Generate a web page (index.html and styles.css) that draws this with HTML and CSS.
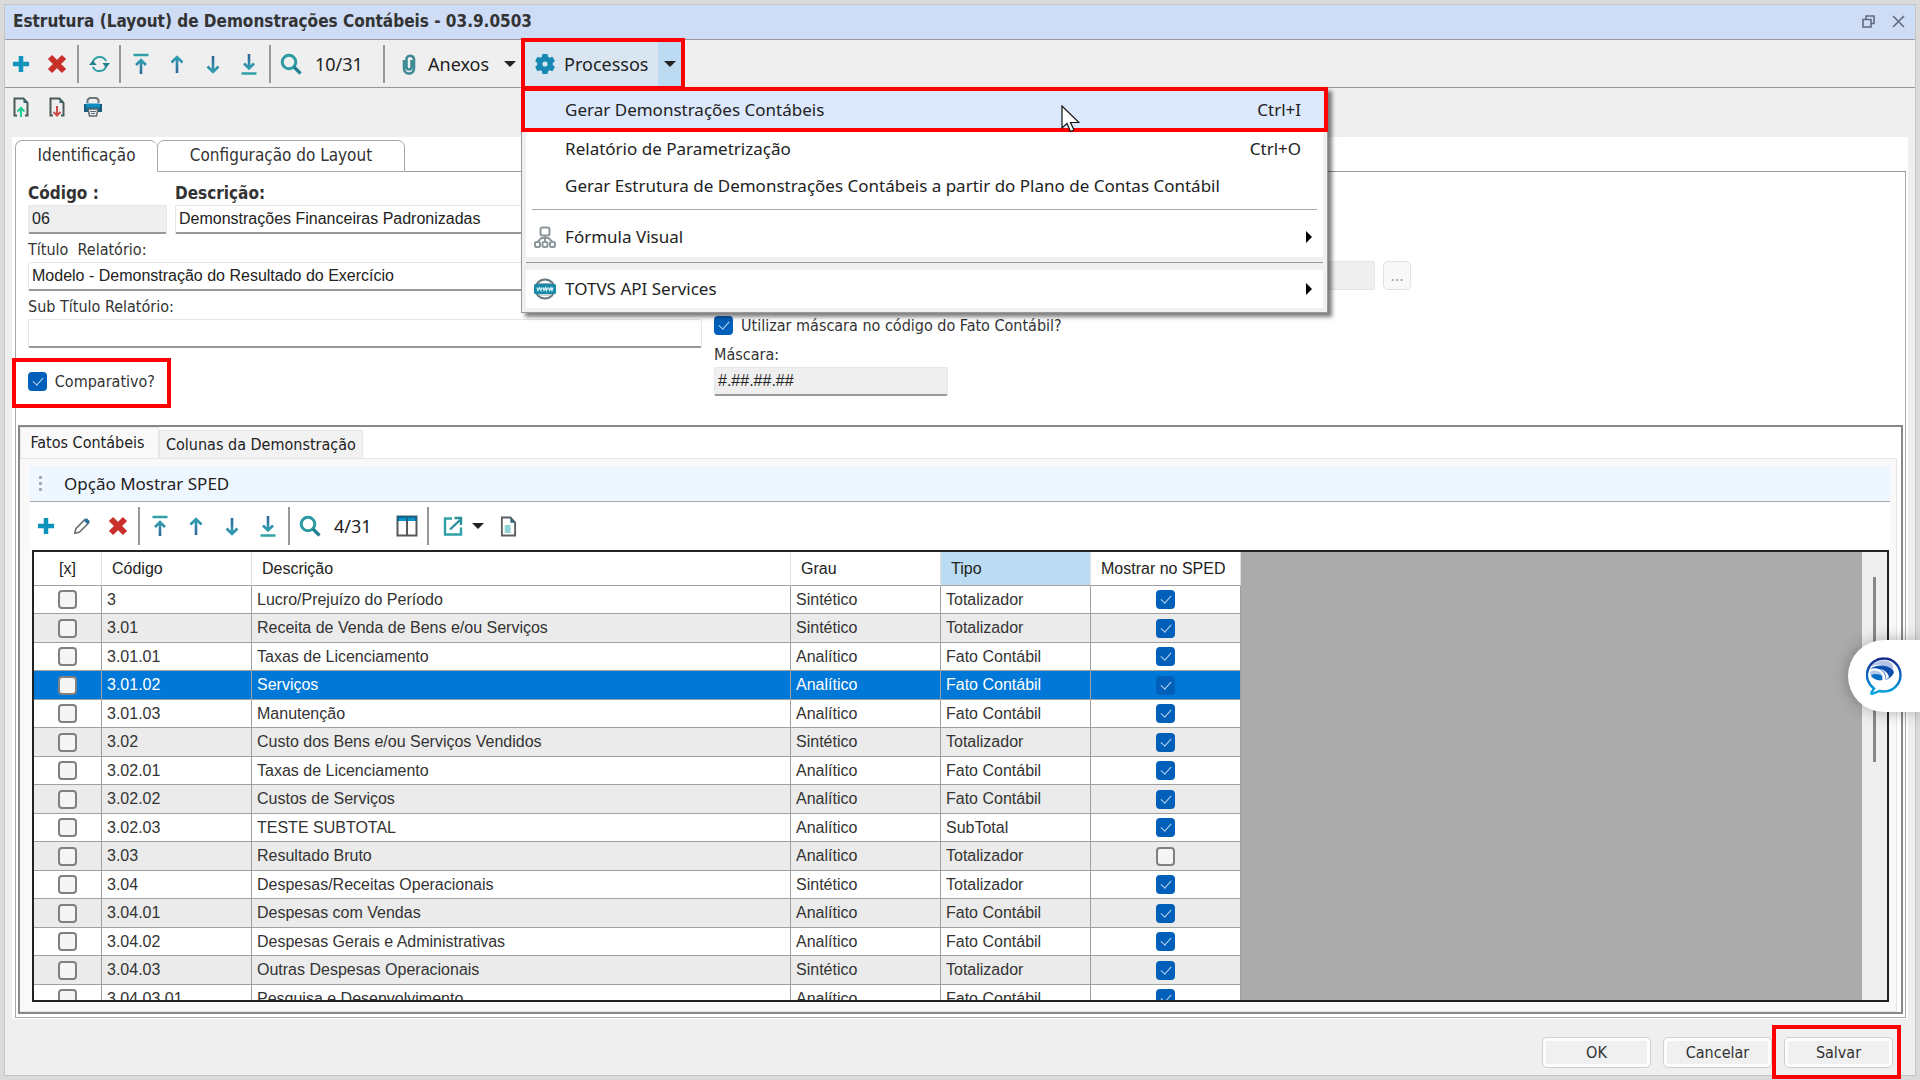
FILE: index.html
```html
<!DOCTYPE html>
<html lang="pt">
<head>
    <meta charset="UTF-8">
    <meta name="viewport" content="width=device-width, initial-scale=1.0">
    <title>Estrutura (Layout) de Demonstrações Contábeis</title>
    <link rel="stylesheet" href="styles.css">
</head>
<body>
    <!-- icones -->
    <svg class="sprite" aria-hidden="true">
        <defs>
            <linearGradient id="seta" x1="0" y1="0" x2="0" y2="1">
                <stop offset="0" stop-color="#2f9fb0"/>
                <stop offset="1" stop-color="#2f6497"/>
            </linearGradient>
            <linearGradient id="seta-b" x1="0" y1="1" x2="0" y2="0">
                <stop offset="0" stop-color="#2f9fb0"/>
                <stop offset="1" stop-color="#2f6497"/>
            </linearGradient>
            <linearGradient id="bolha" x1="0" y1="0" x2="0" y2="1">
                <stop offset="0" stop-color="#14298a"/>
                <stop offset="0.5" stop-color="#0a66bf"/>
                <stop offset="1" stop-color="#00a8e0"/>
            </linearGradient>
        </defs>
        <symbol id="i-plus" viewBox="0 0 20 20"><path d="M10 1v18M1 10h18" stroke="#0e93bd" stroke-width="5"/></symbol>
        <symbol id="i-x" viewBox="0 0 20 20"><path d="M3 3l14 14M17 3L3 17" stroke="#c9302c" stroke-width="6"/></symbol>
        <symbol id="i-refresh" viewBox="0 0 22 20"><path d="M4 8a7.500 7.500 0 0 1 14-1M18 12a7.500 7.500 0 0 1-14 1" fill="none" stroke="#2fa0a5" stroke-width="2"/><path d="M14 9h8l-4 5zM0 11h8L4 6z" fill="#23808f"/></symbol>
        <symbol id="i-top" viewBox="0 0 20 22"><path d="M2.500 2h15" stroke="#2fa0a5" stroke-width="2.500"/><path d="M10 21V7M5 12l5-5 5 5" fill="none" stroke="url(#seta)" stroke-width="2.600"/></symbol>
        <symbol id="i-up" viewBox="0 0 20 22"><path d="M10 20V4M4.500 9.500L10 4l5.500 5.500" fill="none" stroke="url(#seta)" stroke-width="2.600"/></symbol>
        <symbol id="i-down" viewBox="0 0 20 22"><path d="M10 3v16M4.500 13.500L10 19l5.500-5.500" fill="none" stroke="url(#seta-b)" stroke-width="2.600"/></symbol>
        <symbol id="i-bottom" viewBox="0 0 20 22"><path d="M2.500 20.500h15" stroke="#2fa0a5" stroke-width="2.500"/><path d="M10 1v14M5 10.500l5 5 5-5" fill="none" stroke="url(#seta-b)" stroke-width="2.600"/></symbol>
        <symbol id="i-search" viewBox="0 0 22 22"><circle cx="9" cy="9" r="6.800" fill="none" stroke="#2b9aa2" stroke-width="3"/><path d="M14 14l6.500 6.500" stroke="#23808f" stroke-width="3.200"/></symbol>
        <symbol id="i-clip" viewBox="0 0 20 22"><path d="M5 7v8.500a5 5 0 0 0 10 0V6a4 4 0 0 0-7.500-1V14a2.500 2.500 0 0 0 5 0V7" fill="none" stroke="#3d8c94" stroke-width="2.600"/></symbol>
        <symbol id="i-gear" viewBox="0 0 20 20"><path d="M7.500 0h5l.6 2.800 1.600.9 2.800-1 2.400 4.200-2.100 2v2.200l2.100 2-2.400 4.200-2.800-1-1.600.9-.6 2.800h-5l-.6-2.800-1.600-.9-2.800 1L.1 13.100l2.100-2V8.900l-2.100-2 2.400-4.200 2.800 1 1.600-.9z" fill="#1788b4"/><circle cx="10" cy="10" r="2.600" fill="#d9e6f1"/></symbol>
        <symbol id="i-file-up" viewBox="0 0 18 20"><path d="M5 18.500H2.500v-17h9l4 4.500v12.500H13" fill="none" stroke="#4b5b5b" stroke-width="2"/><path d="M11.500 1.500V6h4z" fill="#2f6a70"/><path d="M9 20v-8M5.500 14.500L9 11l3.500 3.500" fill="none" stroke="#1ecb95" stroke-width="2"/></symbol>
        <symbol id="i-file-down" viewBox="0 0 18 20"><path d="M5 18.500H2.500v-17h9l4 4.500v12.500H13" fill="none" stroke="#4b5b5b" stroke-width="2"/><path d="M11.500 1.500V6h4z" fill="#2f6a70"/><path d="M9 9v9M5.500 15L9 18.500l3.500-3.500" fill="none" stroke="#cf4a4a" stroke-width="2"/></symbol>
        <symbol id="i-print" viewBox="0 0 20 20"><path d="M4.500 6V3l2-2h7l2 2v3" fill="none" stroke="#6d7478" stroke-width="2"/><path d="M1 7h18v8H1z" fill="#155f7c"/><path d="M3 6.500h14v4H3z" fill="#0e8fc4"/><path d="M5 12h10l-1.500 7h-7z" fill="#e8eef0" stroke="#5d6a70" stroke-width="1.500"/><path d="M7 14.500h6M8 16.500h4" stroke="#5d6a70"/></symbol>
        <symbol id="i-tree" viewBox="0 0 22 22"><g fill="#fff" stroke="#8d979b" stroke-width="2"><rect x="6.500" y="1.500" width="9" height="8" rx="2"/><path d="M11 10v5M3.500 16l4-4h7l4 4" fill="none"/><rect x="1" y="16" width="5" height="5" rx="1.500"/><rect x="8.500" y="16" width="5" height="5" rx="1.500"/><rect x="16" y="16" width="5" height="5" rx="1.500"/></g></symbol>
        <symbol id="i-www" viewBox="0 0 22 22"><circle cx="11" cy="11" r="9.600" fill="#fff" stroke="#62777f" stroke-width="2"/><path d="M4 5.500h14M4 17h14" stroke="#9aa9ae"/><rect y="6" width="22" height="10" rx="1.500" fill="#168aa8"/><path d="M3 9.500l1 3 1.500-3 1.500 3 1-3M9 9.500l1 3 1.500-3 1 3 1-3M14.500 9.500l1 3 1.500-3 1 3 1-3" fill="none" stroke="#d8f4fa" stroke-width="1.200"/></symbol>
        <symbol id="i-pencil" viewBox="0 0 20 20"><path d="M2 18l1.200-5L13 3l4 4-10 10z" fill="#fff" stroke="#6b7073" stroke-width="1.800"/><path d="M12 4l3-3 4 4-3 3z" fill="#2b6f95"/></symbol>
        <symbol id="i-cols" viewBox="0 0 22 22"><path d="M1.500 1.500h19v19h-19zM11 2v18" fill="#fff" stroke="#55595b" stroke-width="2"/><path d="M1 1h20v5H1z" fill="#12688a"/><path d="M3 3h7v3H3zM12 3h7v3h-7z" fill="#0e93cb"/></symbol>
        <symbol id="i-export" viewBox="0 0 20 20"><path d="M9 2.500H2v16h16v-7" fill="none" stroke="#2fa0a5" stroke-width="2.400"/><path d="M7 13.500L17 4M11.500 2H18v7" fill="none" stroke="#2c8f9c" stroke-width="2.400"/></symbol>
        <symbol id="i-doc" viewBox="0 0 18 22"><path d="M2 1.500h9L16 7v13.500H2z" fill="#fff" stroke="#5b6163" stroke-width="2"/><path d="M11 1.500V7h5z" fill="#2a6a7a"/><path d="M5 9.500h7l-1.500 2 1.500 2-1.500 2L12 18H5z" fill="#8fd3d6"/></symbol>
    </svg>

    <div class="window">
        <header class="titlebar">
            <h1>Estrutura (Layout) de Demonstrações Contábeis - 03.9.0503</h1>
            <button type="button" aria-label="Restaurar"><svg width="13" height="13" viewBox="0 0 13 13"><path d="M1 4.500h8V12H1zM4 4V1h8v7.500H9.500" fill="none" stroke="#5f6b80" stroke-width="1.600"/></svg></button>
            <button type="button" aria-label="Fechar"><svg width="13" height="13" viewBox="0 0 13 13"><path d="M1 1l11 11M12 1L1 12" stroke="#5f6b80" stroke-width="1.600"/></svg></button>
        </header>

        <div class="toolbar">
            <button type="button" aria-label="Incluir"><svg width="18" height="18"><use href="#i-plus"/></svg></button>
            <button type="button" aria-label="Excluir"><svg width="20" height="20"><use href="#i-x"/></svg></button>
            <span class="sep"></span>
            <button type="button" aria-label="Atualizar"><svg width="21" height="20"><use href="#i-refresh"/></svg></button>
            <span class="sep"></span>
            <button type="button" aria-label="Primeiro"><svg width="20" height="22"><use href="#i-top"/></svg></button>
            <button type="button" aria-label="Anterior"><svg width="20" height="22"><use href="#i-up"/></svg></button>
            <button type="button" aria-label="Próximo"><svg width="20" height="22"><use href="#i-down"/></svg></button>
            <button type="button" aria-label="Último"><svg width="20" height="22"><use href="#i-bottom"/></svg></button>
            <span class="sep"></span>
            <button type="button" aria-label="Localizar"><svg width="22" height="22"><use href="#i-search"/></svg></button>
            <span class="count count-main">10/31</span>
            <span class="sep"></span>
            <button type="button" class="drop"><svg width="20" height="22"><use href="#i-clip"/></svg>Anexos<i class="caret"></i></button>

            <div class="processos marked">
                <button type="button" class="proc-btn"><svg width="20" height="20"><use href="#i-gear"/></svg>Processos</button>
                <button type="button" class="proc-split" aria-label="Abrir menu"><i class="caret"></i></button>

                <div class="menu">
                    <button type="button" class="item selected marked"><span>Gerar Demonstrações Contábeis</span><kbd>Ctrl+I</kbd></button>
                    <button type="button" class="item"><span>Relatório de Parametrização</span><kbd>Ctrl+O</kbd></button>
                    <button type="button" class="item"><span>Gerar Estrutura de Demonstrações Contábeis a partir do Plano de Contas Contábil</span></button>
                    <hr>
                    <button type="button" class="item sub"><svg width="22" height="22"><use href="#i-tree"/></svg><span>Fórmula Visual</span><i class="arrow"></i></button>
                    <div class="band"></div>
                    <button type="button" class="item sub"><svg width="22" height="22"><use href="#i-www"/></svg><span>TOTVS API Services</span><i class="arrow"></i></button>
                    <svg class="cursor" width="19" height="28" viewBox="0 0 19 28"><path d="M1 1v22l5-4.500 3.500 8 3.500-1.500-3.500-7.500H18z" fill="#fff" stroke="#111" stroke-width="1.200"/></svg>
                </div>
            </div>
        </div>

        <div class="toolbar-second">
            <button type="button" aria-label="Exportar"><svg width="18" height="20"><use href="#i-file-up"/></svg></button>
            <button type="button" aria-label="Importar"><svg width="18" height="20"><use href="#i-file-down"/></svg></button>
            <button type="button" aria-label="Imprimir"><svg width="20" height="20"><use href="#i-print"/></svg></button>
        </div>

        <main class="panel">
            <div class="tabs">
                <button type="button" class="tab tab-id active">Identificação</button>
                <button type="button" class="tab tab-cfg">Configuração do Layout</button>
                <span class="tabs-line"></span>
            </div>

            <div class="page">
                <form class="form">
                    <div class="col-left">
                        <div class="row">
                            <div class="field field-code">
                                <label class="strong" for="codigo">Código :</label>
                                <input type="text" id="codigo" value="06" readonly>
                            </div>
                            <div class="field grow">
                                <label class="strong" for="descricao">Descrição:</label>
                                <input type="text" id="descricao" value="Demonstrações Financeiras Padronizadas">
                            </div>
                        </div>
                        <div class="field">
                            <label for="titulo">Título&nbsp; Relatório:</label>
                            <input type="text" id="titulo" value="Modelo - Demonstração do Resultado do Exercício">
                        </div>
                        <div class="field">
                            <label for="subtitulo">Sub Título Relatório:</label>
                            <input type="text" id="subtitulo">
                        </div>
                        <div class="check compare marked">
                            <input type="checkbox" id="comparativo" checked>
                            <label for="comparativo">Comparativo?</label>
                        </div>
                    </div>
                    <div class="col-right">
                        <div class="lookup">
                            <input type="text" aria-label="Fórmula" readonly>
                            <button type="button" disabled>...</button>
                        </div>
                        <div class="check">
                            <input type="checkbox" id="usa-mascara" checked>
                            <label for="usa-mascara">Utilizar máscara no código do Fato Contábil?</label>
                        </div>
                        <div class="field field-mask">
                            <label for="mascara">Máscara:</label>
                            <input type="text" id="mascara" value="#.##.##.##" readonly>
                        </div>
                    </div>
                </form>

                <section class="facts">
                    <div class="subtabs">
                        <button type="button" class="subtab on">Fatos Contábeis</button>
                        <button type="button" class="subtab">Colunas da Demonstração</button>
                    </div>
                    <div class="facts-body">
                        <div class="sped"><i class="grip"></i><button type="button">Opção Mostrar SPED</button></div>
                        <div class="toolbar grid-toolbar">
                            <button type="button" aria-label="Incluir"><svg width="18" height="18"><use href="#i-plus"/></svg></button>
                            <button type="button" aria-label="Editar"><svg width="18" height="18"><use href="#i-pencil"/></svg></button>
                            <button type="button" aria-label="Excluir"><svg width="20" height="20"><use href="#i-x"/></svg></button>
                            <span class="sep"></span>
                            <button type="button" aria-label="Primeiro"><svg width="20" height="22"><use href="#i-top"/></svg></button>
                            <button type="button" aria-label="Anterior"><svg width="20" height="22"><use href="#i-up"/></svg></button>
                            <button type="button" aria-label="Próximo"><svg width="20" height="22"><use href="#i-down"/></svg></button>
                            <button type="button" aria-label="Último"><svg width="20" height="22"><use href="#i-bottom"/></svg></button>
                            <span class="sep"></span>
                            <button type="button" aria-label="Localizar"><svg width="22" height="22"><use href="#i-search"/></svg></button>
                            <span class="count">4/31</span>
                            <button type="button" aria-label="Colunas"><svg width="22" height="22"><use href="#i-cols"/></svg></button>
                            <span class="sep"></span>
                            <button type="button" class="drop" aria-label="Exportar"><svg width="20" height="20"><use href="#i-export"/></svg><i class="caret"></i></button>
                            <button type="button" aria-label="Relatório"><svg width="17" height="21"><use href="#i-doc"/></svg></button>
                        </div>

                        <div class="grid">
                            <div class="grid-view">
                                <table>
                                    <colgroup>
                                        <col class="c-sel"><col class="c-cod"><col class="c-desc"><col class="c-grau"><col class="c-tipo"><col class="c-sped">
                                    </colgroup>
                                    <thead>
                                        <tr><th class="mid">[x]</th><th>Código</th><th>Descrição</th><th>Grau</th><th class="sorted">Tipo</th><th>Mostrar no SPED</th></tr>
                                    </thead>
                                    <tbody>
                                        <tr><td class="mid"><input type="checkbox" aria-label="Selecionar"></td><td>3</td><td>Lucro/Prejuízo do Período</td><td>Sintético</td><td>Totalizador</td><td class="mid"><input type="checkbox" aria-label="Mostrar" checked></td></tr>
                                        <tr><td class="mid"><input type="checkbox" aria-label="Selecionar"></td><td>3.01</td><td>Receita de Venda de Bens e/ou Serviços</td><td>Sintético</td><td>Totalizador</td><td class="mid"><input type="checkbox" aria-label="Mostrar" checked></td></tr>
                                        <tr><td class="mid"><input type="checkbox" aria-label="Selecionar"></td><td>3.01.01</td><td>Taxas de Licenciamento</td><td>Analítico</td><td>Fato Contábil</td><td class="mid"><input type="checkbox" aria-label="Mostrar" checked></td></tr>
                                        <tr class="current"><td class="mid"><input type="checkbox" aria-label="Selecionar"></td><td>3.01.02</td><td>Serviços</td><td>Analítico</td><td>Fato Contábil</td><td class="mid"><input type="checkbox" aria-label="Mostrar" checked></td></tr>
                                        <tr><td class="mid"><input type="checkbox" aria-label="Selecionar"></td><td>3.01.03</td><td>Manutenção</td><td>Analítico</td><td>Fato Contábil</td><td class="mid"><input type="checkbox" aria-label="Mostrar" checked></td></tr>
                                        <tr><td class="mid"><input type="checkbox" aria-label="Selecionar"></td><td>3.02</td><td>Custo dos Bens e/ou Serviços Vendidos</td><td>Sintético</td><td>Totalizador</td><td class="mid"><input type="checkbox" aria-label="Mostrar" checked></td></tr>
                                        <tr><td class="mid"><input type="checkbox" aria-label="Selecionar"></td><td>3.02.01</td><td>Taxas de Licenciamento</td><td>Analítico</td><td>Fato Contábil</td><td class="mid"><input type="checkbox" aria-label="Mostrar" checked></td></tr>
                                        <tr><td class="mid"><input type="checkbox" aria-label="Selecionar"></td><td>3.02.02</td><td>Custos de Serviços</td><td>Analítico</td><td>Fato Contábil</td><td class="mid"><input type="checkbox" aria-label="Mostrar" checked></td></tr>
                                        <tr><td class="mid"><input type="checkbox" aria-label="Selecionar"></td><td>3.02.03</td><td>TESTE SUBTOTAL</td><td>Analítico</td><td>SubTotal</td><td class="mid"><input type="checkbox" aria-label="Mostrar" checked></td></tr>
                                        <tr><td class="mid"><input type="checkbox" aria-label="Selecionar"></td><td>3.03</td><td>Resultado Bruto</td><td>Analítico</td><td>Totalizador</td><td class="mid"><input type="checkbox" aria-label="Mostrar"></td></tr>
                                        <tr><td class="mid"><input type="checkbox" aria-label="Selecionar"></td><td>3.04</td><td>Despesas/Receitas Operacionais</td><td>Sintético</td><td>Totalizador</td><td class="mid"><input type="checkbox" aria-label="Mostrar" checked></td></tr>
                                        <tr><td class="mid"><input type="checkbox" aria-label="Selecionar"></td><td>3.04.01</td><td>Despesas com Vendas</td><td>Analítico</td><td>Fato Contábil</td><td class="mid"><input type="checkbox" aria-label="Mostrar" checked></td></tr>
                                        <tr><td class="mid"><input type="checkbox" aria-label="Selecionar"></td><td>3.04.02</td><td>Despesas Gerais e Administrativas</td><td>Analítico</td><td>Fato Contábil</td><td class="mid"><input type="checkbox" aria-label="Mostrar" checked></td></tr>
                                        <tr><td class="mid"><input type="checkbox" aria-label="Selecionar"></td><td>3.04.03</td><td>Outras Despesas Operacionais</td><td>Sintético</td><td>Totalizador</td><td class="mid"><input type="checkbox" aria-label="Mostrar" checked></td></tr>
                                        <tr><td class="mid"><input type="checkbox" aria-label="Selecionar"></td><td>3.04.03.01</td><td>Pesquisa e Desenvolvimento</td><td>Analítico</td><td>Fato Contábil</td><td class="mid"><input type="checkbox" aria-label="Mostrar" checked></td></tr>
                                    </tbody>
                                </table>
                            </div>
                            <div class="scroll"><div class="thumb"></div></div>
                        </div>
                    </div>
                </section>
            </div>
        </main>

        <footer class="actions">
            <button type="button">OK</button>
            <button type="button">Cancelar</button>
            <button type="button" class="marked">Salvar</button>
        </footer>
    </div>

    <button type="button" class="chat" aria-label="Ajuda">
        <svg width="36" height="38" viewBox="0 0 36 38">
            <path d="M18 1.500a16.500 16.500 0 0 1 0 33c-2 0-3 0-4.500-.5L6 37c-1.500-.5-.5-1.500 2-5.500A16.500 16.500 0 0 1 18 1.500z" fill="#fff" stroke="url(#bolha)" stroke-width="2.400"/>
            <path d="M5 10C10 2 24 1 27 9c1 4-1 5-1 5C21 7 12 6 5 10z" fill="#b3c4e6"/>
            <path d="M4 12c8-6 21-4 24 3-1 4-5 7-9 8 2-8-6-14-15-11z" fill="#0b4fb0"/>
            <path d="M4 15c7-4 14 1 13 8-5 1-9 0-12-3z" fill="#b3cbe8"/>
            <path d="M5 18c4-2 9-1 11 1v4c-4 1-9-1-11-5z" fill="#0a6fc4"/>
            <path d="M14 12c5 2 7 7 5 11 2-1 3-2 4-3-1-4-4-7-9-8z" fill="#fff"/>
        </svg>
    </button>
</body>
</html>
```
FILE: styles.css
```css
* {
    box-sizing: border-box;
}
body {
    margin: 0;
    padding: 4px;
    height: 100vh;
    display: flex;
    background-color: #dadada;
    font-family: "DejaVu Sans Condensed", "Liberation Sans", sans-serif;
    font-size: 16px;
    color: #333;
    overflow: hidden;
}
button {
    font: inherit;
    color: inherit;
    background: none;
    border: none;
    padding: 0;
}
svg {
    flex: none;
    display: block;
}
.sprite {
    position: absolute;
    width: 0;
    height: 0;
}
.window {
    flex: 1;
    min-width: 0;
    display: flex;
    flex-direction: column;
    background-color: #efefef;
    border: 1px solid #c4c4c4;
}

/* marcacao em vermelho */
.marked {
    position: relative;
}
.marked::after {
    content: "";
    position: absolute;
    border: 4px solid #f00;
    pointer-events: none;
    inset: 0;
}

/* titulo */
.titlebar {
    display: flex;
    align-items: center;
    gap: 17px;
    height: 35px;
    padding: 0 10px 2px 8px;
    background-color: #cedcf5;
    border-bottom: 1px solid #999;
}
.titlebar h1 {
    flex: 1;
    margin: 0;
    font-size: 17px;
    line-height: 24px;
}

/* barras de ferramentas */
.toolbar {
    display: flex;
    align-items: center;
    gap: 4px;
    height: 48px;
    border-bottom: 1px solid #999;
    font-family: "Noto Sans", "Liberation Sans", sans-serif;
    font-size: 18px;
    color: #222;
}
.toolbar > button {
    display: flex;
    align-items: center;
    justify-content: center;
    width: 32px;
    height: 40px;
}
.sep {
    width: 2px;
    height: 38px;
    background-color: #999;
}
.count {
    width: 57px;
    padding-left: 4px;
}
.count-main {
    width: 68px;
}
.caret {
    border: 6px solid transparent;
    border-top-color: #222;
    border-bottom-width: 0;
}
.toolbar > .drop {
    width: auto;
    gap: 9px;
    padding-left: 10px;
}
.drop .caret {
    margin: 0 1px 0 6px;
}
.processos {
    display: flex;
    width: 164px;
    height: 52px;
    padding: 4px;
    background-color: #d9e6f1;
}
.proc-btn {
    flex: 1;
    display: flex;
    align-items: center;
    gap: 9px;
    padding-left: 10px;
}
.proc-split {
    width: 23px;
    display: flex;
    align-items: center;
    justify-content: center;
    background-color: #bcdaf2;
}
.toolbar-second {
    display: flex;
    align-items: flex-start;
    gap: 4px;
    height: 49px;
    padding-top: 9px;
}
.toolbar-second button {
    display: flex;
    justify-content: center;
    width: 32px;
}

/* menu */
.menu {
    position: absolute;
    z-index: 5;
    top: 49px;
    left: 0;
    width: 807px;
    padding-bottom: 4px;
    background-color: #f0f0f0;
    border: 1px solid #999;
    box-shadow: 4px 4px 4px rgba(0, 0, 0, 0.5);
    font-size: 17px;
    line-height: 24px;
}
.item {
    display: flex;
    align-items: center;
    width: calc(100% - 8px);
    height: 37px;
    margin: 0 4px;
    padding: 0 22px 0 39px;
    background-color: #fff;
    text-align: left;
}
.item span {
    flex: 1;
}
.item kbd {
    font: inherit;
}
.item.selected {
    width: 100%;
    height: 43px;
    margin: 0;
    padding: 2px 26px 0 43px;
    background-color: #dce8fb;
}
.item.selected::after {
    inset: -1px;
}
.menu hr {
    height: 7px;
    margin: 0 4px;
    border: solid #fff;
    border-width: 4px 6px 2px;
    background-color: #aaa;
}
.item.sub {
    height: 38px;
    padding: 0 11px 0 8px;
    gap: 9px;
}
.menu hr + .item.sub {
    height: 45px;
    padding-top: 6px;
}
.band {
    height: 13px;
    padding: 5px 4px 0;
}
.band::before {
    content: "";
    display: block;
    height: 1px;
    background-color: #999;
}
.arrow {
    border: 6px solid transparent;
    border-left-color: #000;
    border-right-width: 0;
}
.cursor {
    position: absolute;
    top: 17px;
    left: 539px;
}

/* painel principal */
.panel {
    flex: 1;
    min-height: 0;
    display: flex;
    flex-direction: column;
    margin: 0 7px;
    padding: 3px 2px 1px 3px;
    background-color: #fff;
}
.tabs {
    display: flex;
    height: 32px;
}
.tab {
    height: 32px;
    padding-bottom: 3px;
    border: 1px solid #a8a8a8;
    border-radius: 7px 7px 0 0;
    font-size: 17px;
}
.tab-id {
    width: 142px;
    border-bottom: none;
    border-right: none;
}
.tab-cfg {
    width: 248px;
}
.tabs-line {
    flex: 1;
    border-bottom: 1px solid #999;
}
.page {
    flex: 1;
    min-height: 0;
    display: flex;
    flex-direction: column;
    padding: 9px 2px 3px;
    border: 1px solid #a8a8a8;
    border-top: none;
}

/* formulario */
.form {
    display: flex;
    gap: 12px;
    padding: 0 10px 25px;
}
.col-left {
    width: 674px;
}
.row {
    display: flex;
    gap: 8px;
}
.field {
    display: flex;
    flex-direction: column;
    margin-bottom: 4px;
}
.field label {
    line-height: 24px;
}
.field label.strong {
    font-size: 17px;
    font-weight: bold;
}
.field-code {
    width: 139px;
}
.grow {
    flex: 1;
}
input[type="text"] {
    height: 29px;
    padding: 0 3px;
    border: 1px solid #e6e6e6;
    border-bottom: 2px solid #999;
    border-radius: 2px;
    background-color: #fff;
    font-family: "Liberation Sans", sans-serif;
    font-size: 16px;
    color: #222;
}
input[type="text"]:read-only {
    background-color: #efefef;
}
input[type="checkbox"] {
    appearance: none;
    position: relative;
    width: 19px;
    height: 19px;
    margin: 0;
    border: 2px solid #808080;
    border-radius: 4px;
    background-color: #f5f5f5;
    vertical-align: middle;
}
input[type="checkbox"]:checked {
    background-color: #005fb8;
    border-color: #005fb8;
}
input[type="checkbox"]:checked::after {
    content: "";
    position: absolute;
    left: 5px;
    top: 1px;
    width: 5px;
    height: 9px;
    border: solid #b8d4ee;
    border-width: 0 1px 1px 0;
    transform: rotate(42deg);
}
.check {
    display: flex;
    align-items: center;
    gap: 8px;
    height: 19px;
}
.compare {
    width: 127px;
    margin-top: 24px;
}
.compare::after {
    inset: -14px -16px -17px;
}
.lookup {
    display: flex;
    gap: 8px;
    margin: 80px 0 26px;
}
.lookup input[type="text"] {
    width: 661px;
    border-bottom: 1px solid #e6e6e6;
}
.lookup button {
    width: 28px;
    height: 29px;
    border: 1px solid #e0e0e0;
    border-radius: 5px;
    background-color: #f8f8f8;
    color: #999;
}
.field-mask {
    width: 234px;
    margin-top: 8px;
}

/* fatos contabeis */
.facts {
    flex: 1;
    min-height: 0;
    display: flex;
    flex-direction: column;
    border: 2px solid #888;
}
.subtabs {
    display: flex;
    align-items: flex-end;
    height: 31px;
    color: #222;
}
.subtab {
    height: 28px;
    padding: 0 6px;
    border: 1px solid #e6e6e6;
    border-bottom: none;
    background-color: #f2f2f2;
}
.subtab.on {
    height: 31px;
    width: 139px;
    padding: 0 4px 2px 0;
    background-color: #f9f9f9;
}
.facts-body {
    flex: 1;
    min-height: 0;
    display: flex;
    flex-direction: column;
    margin-right: 4px;
    padding: 7px 6px 9px 10px;
    background-color: #f9f9f9;
    border: 1px solid #e6e6e6;
    border-width: 1px 1px 1px 0;
}
.sped {
    display: flex;
    align-items: center;
    height: 36px;
    padding-left: 9px;
    background-color: #eef6ff;
    border-bottom: 1px solid #a8a8a8;
    font-family: "Noto Sans", "Liberation Sans", sans-serif;
    font-size: 17px;
    color: #222;
}
.grip {
    width: 3px;
    height: 15px;
    margin-right: 22px;
    background: repeating-linear-gradient(#aaa 0 3px, transparent 3px 6px);
}
.grid-toolbar {
    background-color: #fff;
    border-bottom: none;
}
.grid-toolbar .drop .caret {
    margin: 0 4px 0 0;
}
.grid {
    flex: 1;
    min-height: 0;
    display: flex;
    margin: 0 1px 0 2px;
    border: 2px solid #222;
    background-color: #ababab;
}
.grid-view {
    flex: 1;
    overflow: hidden;
}
table {
    width: 1207px;
    table-layout: fixed;
    border-collapse: separate;
    border-spacing: 0;
    background-color: #fff;
    font-family: "Liberation Sans", sans-serif;
}
.c-sel {
    width: 68px;
}
.c-cod {
    width: 150px;
}
.c-desc {
    width: 539px;
}
.c-grau, .c-tipo, .c-sped {
    width: 150px;
}
th {
    height: 34px;
    padding: 0 10px;
    border-right: 1px solid #e0e0e0;
    border-bottom: 1px solid #a0a0a0;
    font-weight: normal;
    text-align: left;
    color: #222;
}
th.sorted {
    background-color: #bcdcf3;
}
td {
    height: 28px;
    padding: 0 5px;
    border-right: 1px solid #a0a0a0;
    border-bottom: 1px solid #a0a0a0;
    line-height: 20px;
}
tbody tr:nth-child(even) td {
    height: 29px;
}
tbody tr:nth-child(even) {
    background-color: #ebebeb;
}
tbody tr.current {
    background-color: #0078d7;
    color: #fff;
}
.mid {
    padding: 0;
    text-align: center;
}
td.mid {
    line-height: 0;
}
.scroll {
    width: 25px;
    padding: 25px 9px 0 11px;
    background-color: #efefef;
}
.thumb {
    width: 3px;
    height: 185px;
    background-color: #888;
}

/* rodape */
.actions {
    display: flex;
    justify-content: flex-end;
    gap: 12px;
    height: 56px;
    padding: 18px 22px 0;
}
.actions button {
    width: 109px;
    height: 31px;
    border: 1px solid #d0d0d0;
    border-radius: 5px;
    background-color: #f0f0f0;
    box-shadow: inset 0 0 0 3px #fdfdfd;
}
.actions .marked::after {
    inset: -13px -9px -12px -13px;
}

.chat {
    position: fixed;
    right: 0;
    top: 640px;
    width: 72px;
    height: 72px;
    padding-left: 18px;
    border-radius: 36px 0 0 36px;
    background-color: #fff;
    box-shadow: 0 0 16px rgba(0, 0, 0, 0.3);
}
```
